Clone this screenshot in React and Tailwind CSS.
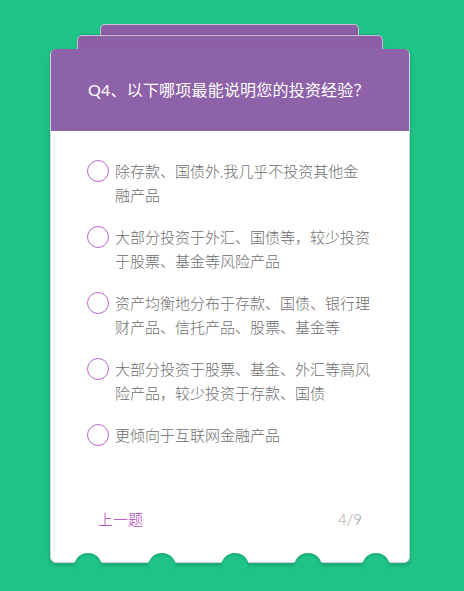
import React from "react";

const options = [
  "除存款、国债外,我几乎不投资其他金融产品",
  "大部分投资于外汇、国债等，较少投资于股票、基金等风险产品",
  "资产均衡地分布于存款、国债、银行理财产品、信托产品、股票、基金等",
  "大部分投资于股票、基金、外汇等高风险产品，较少投资于存款、国债",
  "更倾向于互联网金融产品",
];

const bumps = [23, 97, 170, 243, 311];

export default function App() {
  return (
    <div
      className="w-[464px] h-[591px] bg-[#1ec386] pt-[24px] overflow-hidden"
      style={{ fontFamily: 'Lato, "Noto Sans CJK SC", sans-serif' }}
    >
      <div className="ml-[50px] w-[360px] flex flex-col">
        {/* stacked cards behind */}
        <div className="ml-[50px] w-[259px] h-[11px] bg-[#8c5fa5] border border-b-0 border-[#cdbbd8] rounded-t-[5px]" />
        <div className="ml-[27px] w-[306px] h-[14px] bg-[#8d60a6] border border-b-0 border-[#cdbbd8] rounded-t-[5px] shadow-[0_-1px_2px_rgba(0,0,0,0.12)]" />

        {/* main card */}
        <div className="relative h-[514px] bg-white border border-[#d9d2de] rounded-[6px] shadow-[0_2px_4px_rgba(0,0,0,0.18)] flex flex-col">
          <div className="h-[82px] bg-[#8e62a8] rounded-t-[5px] flex items-center pl-[37px] -mt-px">
            <h1 className="text-[16px] text-white tracking-[0.2px]">
              Q4、以下哪项最能说明您的投资经验？
            </h1>
          </div>

          <div className="flex flex-col gap-[18px] pt-[28px] pl-[36px]">
            {options.map((o, i) => (
              <div key={i} className="flex items-start">
                <span className="mt-px w-[22px] h-[22px] shrink-0 rounded-full border-[1.5px] border-[#b86acb]" />
                <p className="ml-[6px] w-[257px] text-[15px] leading-[24px] text-[#6e6e6e] font-light">
                  {o}
                </p>
              </div>
            ))}
          </div>

          <div className="mt-[60px] flex justify-between pl-[47px] pr-[47px] text-[15px] leading-[24px]">
            <span className="text-[#b03cbf] font-light">上一题</span>
            <span className="text-[#9a9a9a] font-light">4/9</span>
          </div>

          {/* notches */}
          {bumps.map((l) => (
            <span
              key={l}
              className="absolute bottom-[-19px] w-[28px] h-[28px] rounded-full bg-[#1ec386] shadow-[inset_0_2px_2px_rgba(0,0,0,0.12)]"
              style={{ left: l }}
            />
          ))}
        </div>
      </div>
    </div>
  );
}
